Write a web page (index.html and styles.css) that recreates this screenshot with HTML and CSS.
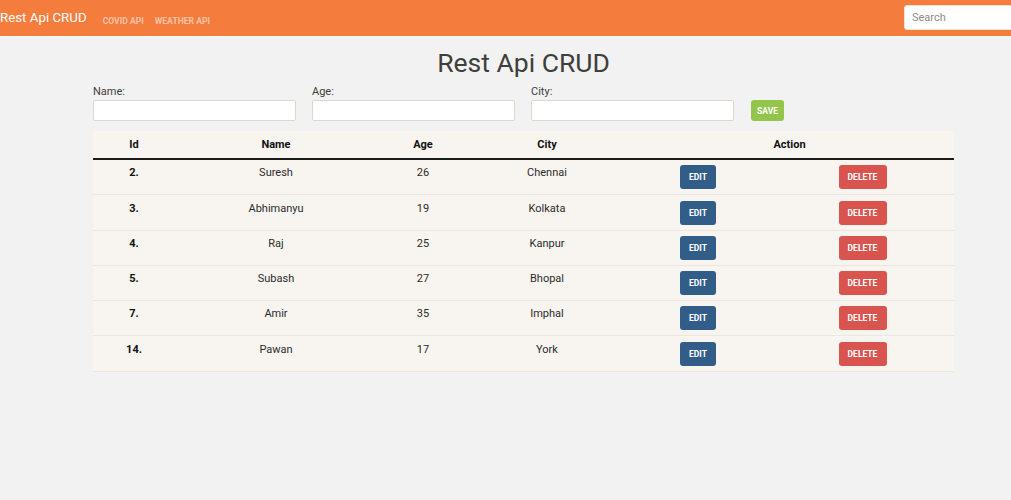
FILE: index.html
```html
<!DOCTYPE html>
<html>
<head>
<meta charset="utf-8">
<title>Rest Api CRUD</title>
<link rel="stylesheet" href="styles.css">
</head>
<body>
<nav class="navbar">
  <a class="brand" href="#">Rest Api CRUD</a>
  <ul class="nav-links">
    <li><a href="#">Covid Api</a></li>
    <li><a href="#">Weather Api</a></li>
  </ul>
  <input class="search" type="text" placeholder="Search">
</nav>
<main class="container">
  <h1 class="title">Rest Api CRUD</h1>
  <form class="crud-form">
    <div class="field">
      <label>Name:</label>
      <input type="text">
    </div>
    <div class="field">
      <label>Age:</label>
      <input type="text">
    </div>
    <div class="field">
      <label>City:</label>
      <input type="text">
    </div>
    <button type="button" class="btn btn-save">Save</button>
  </form>
  <table class="data-table">
    <colgroup>
      <col class="c-id"><col class="c-name"><col class="c-age"><col class="c-city"><col class="c-edit"><col class="c-del">
    </colgroup>
    <thead>
      <tr><th>Id</th><th>Name</th><th>Age</th><th>City</th><th colspan="2">Action</th></tr>
    </thead>
    <tbody>
      <tr><td class="id">2.</td><td>Suresh</td><td>26</td><td>Chennai</td><td class="act"><button class="btn btn-edit">Edit</button></td><td class="act"><button class="btn btn-del">Delete</button></td></tr>
      <tr class="tall"><td class="id">3.</td><td>Abhimanyu</td><td>19</td><td>Kolkata</td><td class="act"><button class="btn btn-edit">Edit</button></td><td class="act"><button class="btn btn-del">Delete</button></td></tr>
      <tr><td class="id">4.</td><td>Raj</td><td>25</td><td>Kanpur</td><td class="act"><button class="btn btn-edit">Edit</button></td><td class="act"><button class="btn btn-del">Delete</button></td></tr>
      <tr><td class="id">5.</td><td>Subash</td><td>27</td><td>Bhopal</td><td class="act"><button class="btn btn-edit">Edit</button></td><td class="act"><button class="btn btn-del">Delete</button></td></tr>
      <tr><td class="id">7.</td><td>Amir</td><td>35</td><td>Imphal</td><td class="act"><button class="btn btn-edit">Edit</button></td><td class="act"><button class="btn btn-del">Delete</button></td></tr>
      <tr class="tall"><td class="id">14.</td><td>Pawan</td><td>17</td><td>York</td><td class="act"><button class="btn btn-edit">Edit</button></td><td class="act"><button class="btn btn-del">Delete</button></td></tr>
    </tbody>
  </table>
</main>
</body>
</html>
```

FILE: styles.css
```css
* { box-sizing: border-box; }
html, body { margin: 0; padding: 0; }
body {
  background: #f2f2f2;
  font-family: Roboto, "Liberation Sans", sans-serif;
  color: #3e3f3a;
}
.navbar {
  height: 36px;
  background: #f47c3c;
  display: flex;
  align-items: center;
  padding: 0;
}
.brand {
  color: #fff;
  font-size: 13.3px;
  text-decoration: none;
  margin-right: 16px;
  line-height: 20px;
  margin-top: -1px;
}
.nav-links {
  list-style: none;
  margin: 0;
  padding: 0;
  display: flex;
  gap: 11px;
  flex: 1;
}
.nav-links a {
  color: rgba(255,255,255,0.55);
  font-size: 8.6px;
  font-weight: 700;
  text-transform: uppercase;
  text-decoration: none;
}
.search {
  width: 120px;
  height: 25px;
  margin-right: -13px;
  margin-top: -1px;
  border: 1px solid #e8e2d8;
  border-radius: 3px;
  padding: 0 7px;
  font-family: inherit;
  font-size: 11px;
  background: #fff;
  outline: none;
}
.search::placeholder { color: #8e8c84; }
.container {
  width: 861px;
  margin-left: 93px;
}
.title {
  margin: 10px 0 5px;
  text-align: center;
  font-size: 26.5px;
  font-weight: 400;
  line-height: 34px;
  color: #3e3f3a;
}
.crud-form {
  display: flex;
  align-items: flex-end;
  gap: 16px;
  margin-bottom: 10px;
}
.field { display: flex; flex-direction: column; }
.field label {
  font-size: 11px;
  line-height: 14px;
  margin-bottom: 1px;
  color: #3e3f3a;
}
.field input {
  width: 203px;
  height: 21px;
  border: 1px solid #dfd7ca;
  border-radius: 2px;
  background: #fff;
  outline: none;
}
.btn {
  border: none;
  border-radius: 3px;
  color: #fff;
  font-family: inherit;
  font-weight: 700;
  text-transform: uppercase;
  cursor: pointer;
  padding: 0;
}
.btn-save {
  width: 33px;
  height: 21px;
  background: #93c54b;
  font-size: 8.5px;
  margin-left: 1px;
}
.data-table {
  width: 861px;
  border-collapse: collapse;
  background: #f8f5f0;
  table-layout: fixed;
  font-size: 11px;
}
.c-id { width: 82px; }
.c-name { width: 202px; }
.c-age { width: 92px; }
.c-city { width: 156px; }
.c-edit { width: 146px; }
.c-del { width: 183px; }
.data-table th {
  font-weight: 700;
  color: #111;
  text-align: center;
  padding: 6px 6px 6px;
  line-height: 15px;
  border-bottom: 2px solid #1a1a1a;
  font-size: 11px;
}
.data-table td {
  text-align: center;
  vertical-align: top;
  padding: 5px 6px 0;
  height: 35px;
  line-height: 16px;
  color: #2b2b2b;
  border-bottom: 1px solid #ebe7e0;
}
.data-table tr.tall td { height: 36px; padding-top: 6px; }
.data-table tr.tall td.act { padding-top: 6px; }
.data-table td.id { font-weight: 700; color: #111; }
.data-table td.act { padding-top: 5px; }
.btn-edit {
  width: 36px;
  height: 24px;
  background: #325d88;
  font-size: 8.5px;
}
.btn-del {
  width: 48px;
  height: 24px;
  background: #d9534f;
  font-size: 8.5px;
}
```
